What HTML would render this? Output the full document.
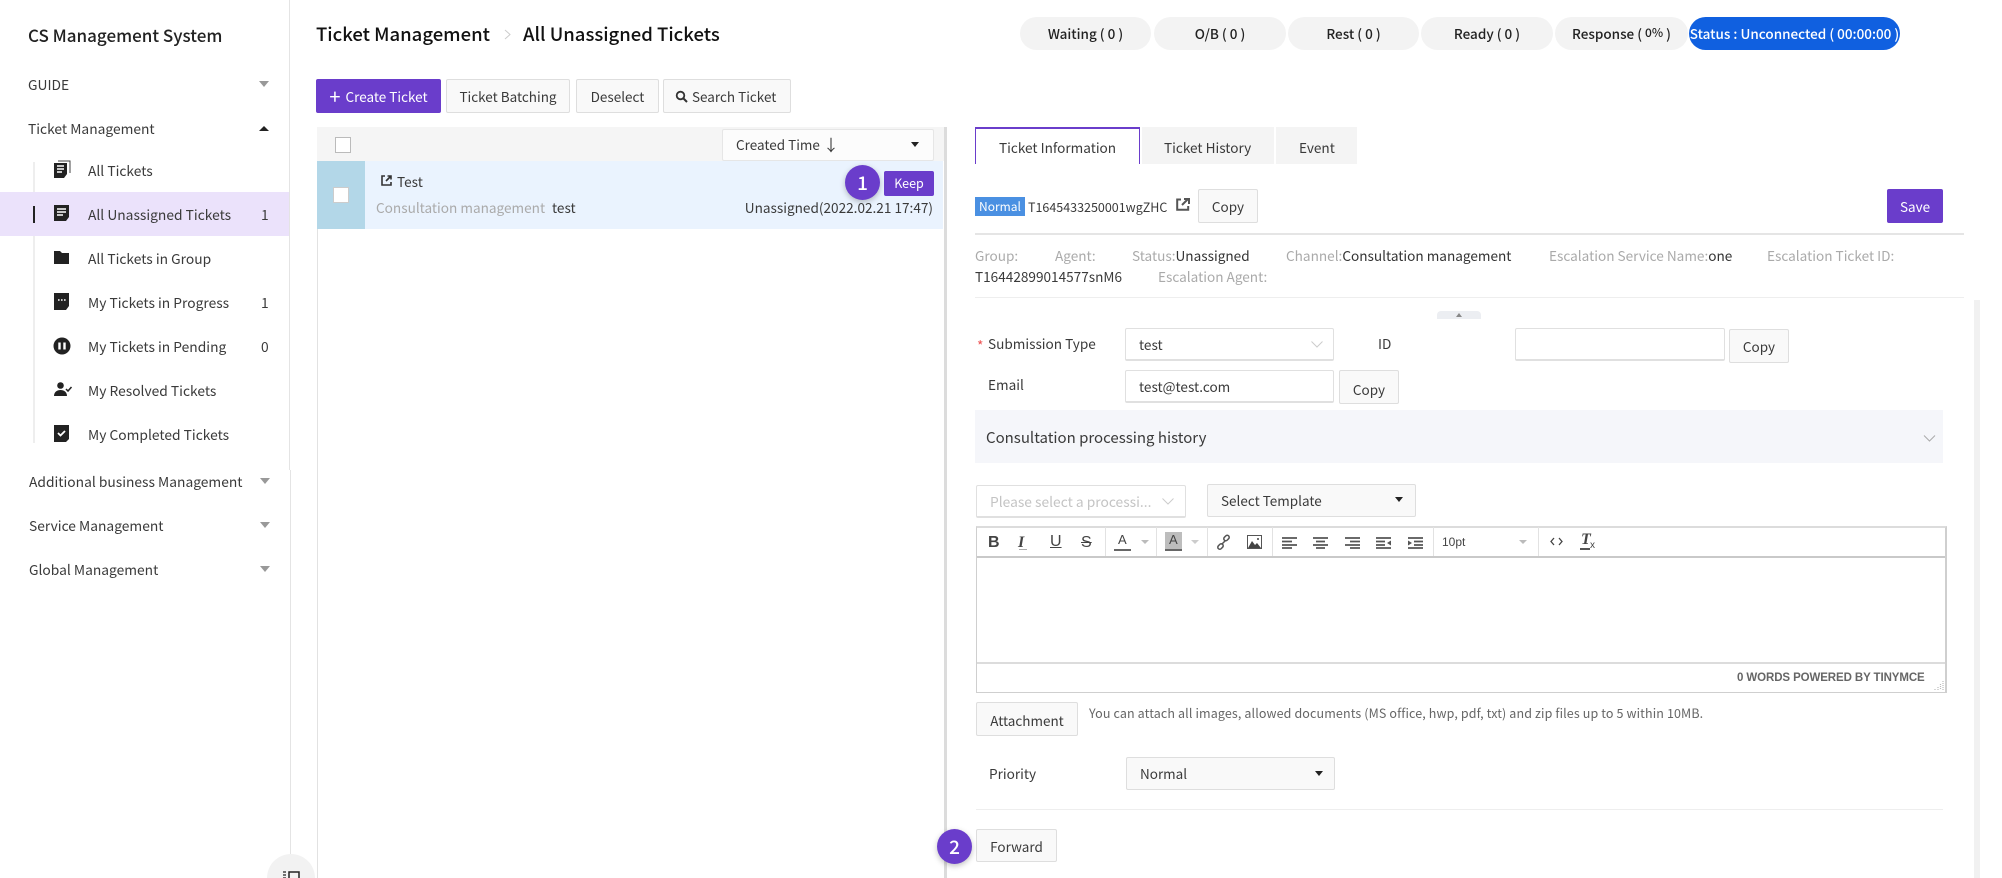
<!DOCTYPE html>
<html><head><meta charset="utf-8"><title>CS Management System</title>
<style>
html,body{margin:0;padding:0;background:#fff;width:2002px;height:878px;overflow:hidden}
#w{position:absolute;left:0;top:0;width:2002px;height:878px;overflow:hidden;font-family:"Noto Sans CJK KR","Liberation Sans",sans-serif;color:#333}
.t{position:absolute;white-space:nowrap;line-height:20px;font-size:13.8px;color:#3a3a3a}
.r{font-size:13.6px}
.s{position:absolute;box-sizing:border-box}
.b{position:absolute;box-sizing:border-box;border:1px solid #dedede;border-radius:2px;background:#f9f9f9;display:flex;align-items:center;justify-content:center;font-size:13.5px;color:#3a3a3a;white-space:nowrap}
.p{background:#6a3dcb;border-color:#6a3dcb;color:#fff}
.pill{position:absolute;top:17px;height:33px;padding-bottom:2px;box-sizing:border-box;border-radius:17px;background:#f3f3f3;display:flex;align-items:center;justify-content:center;font-size:13.5px;font-weight:500;color:#222;white-space:nowrap}
.inp{position:absolute;box-sizing:border-box;border:1px solid #e0e0e0;border-bottom-width:2px;border-radius:2px;background:#fff}
.d{position:absolute;width:0;height:0;border-left:5px solid transparent;border-right:5px solid transparent;border-top:6px solid #999}
.u{position:absolute;width:0;height:0;border-left:5px solid transparent;border-right:5px solid transparent;border-bottom:5px solid #222}
.k{position:absolute;width:0;height:0;border-left:4px solid transparent;border-right:4px solid transparent;border-top:5px solid #222}
.c{position:absolute;border-radius:50%;width:35px;height:35px;background:#6a3dcb;color:#fff;display:flex;align-items:center;justify-content:center;font-size:19px;font-weight:500;box-shadow:0 2px 6px rgba(0,0,0,.25)}
.gr{color:#aaa}
svg{position:absolute;overflow:visible}
.e{position:absolute;font-family:"Liberation Sans",sans-serif;color:#444;line-height:20px;white-space:nowrap}
.sep{position:absolute;top:527px;height:29px;width:1px;background:#e2e2e2}
.m{position:absolute;height:2px;background:#555}
</style></head><body><div id="w">

<!-- sidebar -->
<div class="s" style="left:289px;top:0;width:1px;height:470px;background:#e4e4e4"></div>
<div class="s" style="left:290px;top:470px;width:1px;height:408px;background:#e4e4e4"></div>
<div class="t" style="left:28px;top:25px;font-size:17px;font-weight:500;color:#222">CS Management System</div>
<div class="t" style="left:28px;top:74px">GUIDE</div><div class="d" style="left:259px;top:81px"></div>
<div class="t" style="left:28px;top:118px">Ticket Management</div><div class="u" style="left:259px;top:126px"></div>
<div class="s" style="left:33px;top:162px;width:2px;height:281px;background:#eee"></div>
<div class="s" style="left:0;top:192px;width:289px;height:44px;background:#ebe2fb"></div>
<div class="s" style="left:33px;top:206px;width:2px;height:17px;background:#222"></div>

<svg style="left:54px;top:160px" width="17" height="18" viewBox="0 0 17 18"><path d="M0 3h13v11l-3 4H0z" fill="#222"/><path d="M4 1h12v12" fill="none" stroke="#444" stroke-width="1"/><path d="M3 6h7M3 9h7M3 12h5" stroke="#fff" stroke-width="1.4"/></svg>
<div class="t" style="left:88px;top:160px">All Tickets</div>

<svg style="left:54px;top:205px" width="16" height="16" viewBox="0 0 16 16"><path d="M0 0h15v12l-3 4H0z" fill="#222"/><path d="M3 4h9M3 7h9M3 10h6" stroke="#fff" stroke-width="1.4"/></svg>
<div class="t" style="left:88px;top:204px">All Unassigned Tickets</div><div class="t" style="left:261px;top:204px">1</div>

<svg style="left:54px;top:251px" width="15" height="13" viewBox="0 0 15 13"><path d="M0 0h6l2 2h7v11H0z" fill="#222"/></svg>
<div class="t" style="left:88px;top:248px">All Tickets in Group</div>

<svg style="left:54px;top:293px" width="15" height="17" viewBox="0 0 15 17"><path d="M0 0h15v13l-3 4H0z" fill="#222"/><path d="M4 7h1.600M7 7h1.600M10 7h1.600" stroke="#fff" stroke-width="1.6"/></svg>
<div class="t" style="left:88px;top:292px">My Tickets in Progress</div><div class="t" style="left:261px;top:292px">1</div>

<svg style="left:53px;top:337px" width="18" height="18" viewBox="0 0 18 18"><circle cx="9" cy="9" r="8.500" fill="#222"/><path d="M6.500 5.500v7M11.500 5.500v7" stroke="#fff" stroke-width="2.400"/></svg>
<div class="t" style="left:88px;top:336px">My Tickets in Pending</div><div class="t" style="left:261px;top:336px">0</div>

<svg style="left:54px;top:382px" width="18" height="15" viewBox="0 0 18 15"><circle cx="6.500" cy="3.500" r="3.300" fill="#222"/><path d="M0 14c0-4 3-6 6.500-6s6.500 2 6.500 6z" fill="#222"/><path d="M12 7l2 2 3.500-4" fill="none" stroke="#222" stroke-width="1.500"/></svg>
<div class="t" style="left:88px;top:380px">My Resolved Tickets</div>

<svg style="left:54px;top:425px" width="15" height="17" viewBox="0 0 15 17"><path d="M0 0h15v14l-3 3H0z" fill="#222"/><path d="M4 8l2.500 2.500L11 6" fill="none" stroke="#fff" stroke-width="1.800"/></svg>
<div class="t" style="left:88px;top:424px">My Completed Tickets</div>

<div class="t" style="left:29px;top:471px">Additional business Management</div><div class="d" style="left:260px;top:478px"></div>
<div class="t" style="left:29px;top:515px">Service Management</div><div class="d" style="left:260px;top:522px"></div>
<div class="t" style="left:29px;top:559px">Global Management</div><div class="d" style="left:260px;top:566px"></div>

<div class="s" style="left:267px;top:854px;width:48px;height:48px;border-radius:50%;background:#f2f2f2"></div>
<svg style="left:282px;top:871px" width="18" height="8" viewBox="0 0 18 8"><path d="M1 1h3M1 4h3M1 7h3" stroke="#222" stroke-width="1.300"/><path d="M7 8V1h10v7" fill="none" stroke="#222" stroke-width="1.500"/></svg>

<!-- header -->
<div class="t" style="left:316px;top:24px;font-size:18.500px;font-weight:500;color:#111">Ticket Management</div>
<svg style="left:504px;top:29px" width="7" height="11" viewBox="0 0 7 11"><path d="M1 1l5 4.500L1 10" fill="none" stroke="#ccc" stroke-width="1"/></svg>
<div class="t" style="left:523px;top:24px;font-size:18.500px;font-weight:500;color:#111">All Unassigned Tickets</div>

<div class="pill" style="left:1020px;width:131px">Waiting ( 0 )</div>
<div class="pill" style="left:1154px;width:132px">O/B ( 0 )</div>
<div class="pill" style="left:1288px;width:131px">Rest ( 0 )</div>
<div class="pill" style="left:1421px;width:132px">Ready ( 0 )</div>
<div class="pill" style="left:1555px;width:133px">Response ( <span style="font-size:12px;margin:0 3px">0%</span> )</div>
<div class="pill" style="left:1689px;width:211px;background:#1060e0;color:#fff">Status : Unconnected ( 00:00:00 )</div>

<!-- list -->
<div class="b p" style="left:316px;top:79px;width:125px;height:34px"><span style="font-size:20px;margin-right:5px;line-height:18px">+</span>Create Ticket</div>
<div class="b" style="left:446px;top:79px;width:124px;height:34px">Ticket Batching</div>
<div class="b" style="left:576px;top:79px;width:83px;height:34px">Deselect</div>
<div class="b" style="left:663px;top:79px;width:128px;height:34px;justify-content:flex-start;padding-left:28px"><svg style="left:11px;top:10px" width="13" height="13" viewBox="0 0 13 13"><circle cx="5.500" cy="5.500" r="3.800" fill="none" stroke="#333" stroke-width="1.800"/><path d="M8.500 8.500l3.500 3.500" stroke="#333" stroke-width="2"/></svg>Search Ticket</div>

<div class="s" style="left:317px;top:127px;width:1px;height:751px;background:#e2e2e2"></div>
<div class="s" style="left:944px;top:127px;width:3px;height:751px;background:#dcdcdc"></div>
<div class="s" style="left:317px;top:127px;width:627px;height:34px;background:#f5f5f5"></div>
<div class="s" style="left:335px;top:137px;width:16px;height:16px;background:#fff;border:1px solid #bbb"></div>
<div class="b" style="left:722px;top:129px;width:212px;height:32px;background:#fcfcfc;justify-content:flex-start;padding:0 0 2px 13px;border-color:#e6e6e6">Created Time&nbsp;<span style="font-size:16px;line-height:16px">↓</span></div>
<div class="k" style="left:911px;top:142px"></div>
<div class="s" style="left:317px;top:161px;width:626px;height:68px;background:#eaf3fe"></div>
<div class="s" style="left:317px;top:161px;width:48px;height:68px;background:#b3d7e8"></div>
<div class="s" style="left:333px;top:187px;width:16px;height:16px;background:#fff;border:1px solid #ccc"></div>
<svg style="left:381px;top:175px" width="11" height="11" viewBox="0 0 11 11"><path d="M4 1H1v9h9V7" fill="none" stroke="#333" stroke-width="1.600"/><path d="M5 6l5-5M6.500 1H10v3.500" fill="none" stroke="#333" stroke-width="1.600"/></svg>
<div class="t r" style="left:397px;top:171px">Test</div>
<div class="t gr r" style="left:376px;top:197px">Consultation management</div>
<div class="t r" style="left:552px;top:197px">test</div>
<div class="t r" style="right:1069px;top:197px">Unassigned(2022.02.21 17:47)</div>
<div class="b p" style="left:884px;top:171px;width:50px;height:25px;font-size:12.500px;padding-bottom:2px">Keep</div>
<div class="c" style="left:845px;top:165px">1</div>

<!-- detail -->
<div class="s" style="left:975px;top:127px;width:165px;height:37px;border:2px solid #6a3dcb;border-bottom:0;border-left-width:1.500px;border-right-width:1.500px"></div>
<div class="t r" style="left:999px;top:137px">Ticket Information</div>
<div class="s" style="left:1142px;top:127px;width:132px;height:37px;background:#f4f4f4"></div>
<div class="t r" style="left:1164px;top:137px">Ticket History</div>
<div class="s" style="left:1276px;top:127px;width:81px;height:37px;background:#f4f4f4"></div>
<div class="t r" style="left:1299px;top:137px">Event</div>

<div class="s" style="left:975px;top:197px;width:50px;height:19px;background:#4a90e2;color:#fff;font-size:12px;line-height:19px;text-align:center">Normal</div>
<div class="t" style="left:1028px;top:197px;font-size:12.500px">T1645433250001wgZHC</div>
<svg style="left:1176px;top:198px" width="14" height="13" viewBox="0 0 14 13"><path d="M5 1.500H1.200v10.300h11V8" fill="none" stroke="#555" stroke-width="2"/><path d="M6 7l6-6M8 1h5v5" fill="none" stroke="#555" stroke-width="2"/></svg>
<div class="b" style="left:1198px;top:189px;width:60px;height:34px">Copy</div>
<div class="b p" style="left:1887px;top:189px;width:56px;height:34px">Save</div>
<div class="s" style="left:975px;top:233px;width:989px;height:2px;background:#e5e5e5"></div>

<div class="t gr r" style="left:975px;top:245px">Group:</div>
<div class="t gr r" style="left:1055px;top:245px">Agent:</div>
<div class="t gr r" style="left:1132px;top:245px">Status:<span style="color:#333">Unassigned</span></div>
<div class="t gr r" style="left:1286px;top:245px">Channel:<span style="color:#333">Consultation management</span></div>
<div class="t gr r" style="left:1549px;top:245px">Escalation Service Name:<span style="color:#333">one</span></div>
<div class="t gr r" style="left:1767px;top:245px">Escalation Ticket ID:</div>
<div class="t r" style="left:975px;top:266px">T16442899014577snM6</div>
<div class="t gr r" style="left:1158px;top:266px">Escalation Agent:</div>
<div class="s" style="left:975px;top:297px;width:989px;height:1px;background:#eee"></div>
<div class="s" style="left:1974px;top:300px;width:6px;height:578px;background:#f1f1f1"></div>

<div class="s" style="left:1437px;top:311px;width:44px;height:8px;background:#eceef2;border-radius:4px 4px 0 0"></div>
<div class="s" style="left:1456px;top:313px;width:0;height:0;border-left:3px solid transparent;border-right:3px solid transparent;border-bottom:4px solid #888"></div>

<div class="t" style="left:977px;top:335px;color:#e55">*</div>
<div class="t r" style="left:988px;top:333px">Submission Type</div>
<div class="inp" style="left:1125px;top:328px;width:209px;height:33px"></div>
<div class="t r" style="left:1139px;top:334px">test</div>
<svg style="left:1311px;top:341px" width="12" height="7" viewBox="0 0 12 7"><path d="M.500 .500L6 6 11.500 .500" fill="none" stroke="#ccc" stroke-width="1"/></svg>
<div class="t r" style="left:1378px;top:333px">ID</div>
<div class="inp" style="left:1515px;top:328px;width:210px;height:33px"></div>
<div class="b" style="left:1729px;top:329px;width:60px;height:34px">Copy</div>

<div class="t r" style="left:988px;top:374px">Email</div>
<div class="inp" style="left:1125px;top:370px;width:209px;height:33px"></div>
<div class="t r" style="left:1139px;top:376px">test@test.com</div>
<div class="b" style="left:1339px;top:370px;width:60px;height:34px;padding-top:3px">Copy</div>

<div class="s" style="left:975px;top:410px;width:968px;height:53px;background:#f5f6fa"></div>
<div class="t" style="left:986px;top:428px;font-size:15px">Consultation processing history</div>
<svg style="left:1923px;top:435px" width="13" height="7" viewBox="0 0 12 7"><path d="M.500 .500L6 6 11.500 .500" fill="none" stroke="#aaa" stroke-width="1"/></svg>

<div class="inp" style="left:976px;top:485px;width:210px;height:33px"></div>
<div class="t" style="left:990px;top:491px;color:#c4c4c4">Please select a processi...</div>
<svg style="left:1162px;top:498px" width="12" height="7" viewBox="0 0 12 7"><path d="M.500 .500L6 6 11.500 .500" fill="none" stroke="#ccc" stroke-width="1"/></svg>
<div class="b" style="left:1207px;top:484px;width:209px;height:33px;justify-content:flex-start;padding:0 0 2px 13px">Select Template</div>
<div class="k" style="left:1395px;top:497px"></div>

<!-- editor -->
<div class="s" style="left:976px;top:526px;width:971px;height:167px;border:1.500px solid #cfcfcf;border-top:2px solid #dcdcdc;border-right-width:2px"></div>
<div class="s" style="left:977px;top:556px;width:968px;height:2px;background:#c9c9c9"></div>
<div class="s" style="left:977px;top:662px;width:968px;height:2px;background:#dcdcdc"></div>
<div class="sep" style="left:1105px"></div><div class="sep" style="left:1156px"></div><div class="sep" style="left:1207px"></div><div class="sep" style="left:1272px"></div><div class="sep" style="left:1433px"></div><div class="sep" style="left:1538px"></div>

<div class="e" style="left:988px;top:533px;font-size:16px;font-weight:bold">B</div>
<div class="e" style="left:1018px;top:533px;font-size:16px;font-style:italic;font-weight:bold;font-family:'Liberation Serif',serif">I</div>
<div class="s" style="left:1019px;top:549px;width:8px;height:1px;background:#aaa"></div>
<div class="e" style="left:1050px;top:532px;font-size:16px;text-decoration:underline">U</div>
<div class="e" style="left:1081px;top:533px;font-size:16px;text-decoration:line-through">S</div>
<div class="e" style="left:1118px;top:530px;font-size:13px">A</div>
<div class="m" style="left:1114px;top:549px;width:17px;background:#666"></div>
<div class="s" style="left:1141px;top:540px;width:0;height:0;border-left:4px solid transparent;border-right:4px solid transparent;border-top:4px solid #bbb"></div>
<div class="s" style="left:1165px;top:532px;width:17px;height:19px;background:#bdbdbd"></div>
<div class="e" style="left:1169px;top:530px;font-size:13px">A</div>
<div class="m" style="left:1165px;top:549px;width:17px;background:#666"></div>
<div class="s" style="left:1191px;top:540px;width:0;height:0;border-left:4px solid transparent;border-right:4px solid transparent;border-top:4px solid #ccc"></div>
<svg style="left:1216px;top:535px" width="15" height="15" viewBox="0 0 15 15"><g fill="none" stroke="#555" stroke-width="1.500"><rect x="7.500" y="1" width="6" height="4" rx="2" transform="rotate(-45 10.500 3)"/><rect x="1.500" y="9.500" width="6" height="4" rx="2" transform="rotate(-45 4.500 11.500)"/><path d="M5.500 9.500l4-4"/></g></svg>
<svg style="left:1247px;top:535px" width="15" height="14" viewBox="0 0 15 14"><rect width="15" height="14" fill="#555"/><rect x="1" y="1" width="13" height="12" fill="#fff"/><path d="M1 13l4-7 3 4 2-2 4 5z" fill="#444"/><circle cx="11" cy="4" r="1" fill="#444"/></svg>
<svg style="left:1282px;top:537px" width="15" height="12" viewBox="0 0 15 12"><path d="M0 1h15M0 4.500h10M0 8h15M0 11h10" stroke="#555" stroke-width="1.700"/></svg>
<svg style="left:1313px;top:537px" width="15" height="12" viewBox="0 0 15 12"><path d="M0 1h15M3 4.500h9M0 8h15M3 11h9" stroke="#555" stroke-width="1.700"/></svg>
<svg style="left:1345px;top:537px" width="15" height="12" viewBox="0 0 15 12"><path d="M0 1h15M5 4.500h10M0 8h15M5 11h10" stroke="#555" stroke-width="1.700"/></svg>
<svg style="left:1376px;top:537px" width="15" height="12" viewBox="0 0 15 12"><path d="M0 1h15M0 4.500h9M0 8h9M0 11h15" stroke="#555" stroke-width="1.700"/><path d="M15 3.500v5l-4-2.500z" fill="#555"/></svg>
<svg style="left:1408px;top:537px" width="15" height="12" viewBox="0 0 15 12"><path d="M0 1h15M6 4.500h9M6 8h9M0 11h15" stroke="#555" stroke-width="1.700"/><path d="M0 3.500v5l4-2.500z" fill="#555"/></svg>
<div class="e" style="left:1442px;top:532px;font-size:12px">10pt</div>
<div class="s" style="left:1519px;top:540px;width:0;height:0;border-left:4px solid transparent;border-right:4px solid transparent;border-top:4px solid #bbb"></div>
<svg style="left:1550px;top:537px" width="13" height="9" viewBox="0 0 13 9"><path d="M4 1L1 4.500 4 8M9 1l3 3.500L9 8" fill="none" stroke="#444" stroke-width="1.300"/></svg>
<div class="e" style="left:1581px;top:530px;font-size:16px;font-style:italic;font-weight:bold;font-family:'Liberation Serif',serif">T</div>
<div class="s" style="left:1580px;top:548px;width:10px;height:2px;background:#555"></div>
<div class="e" style="left:1590px;top:536px;font-size:10px">x</div>

<div class="e" style="left:1737px;top:668px;font-size:11.500px;font-weight:bold;color:#666;letter-spacing:-.1px">0 WORDS POWERED BY TINYMCE</div>
<svg style="left:1935px;top:680px" width="9" height="10" viewBox="0 0 9 10"><path d="M8 1v9M5.500 4v6M3 7v3M0 9v1" stroke="#bbb" stroke-width="1.200" stroke-dasharray="1 1"/></svg>

<div class="b" style="left:976px;top:702px;width:102px;height:34px;padding-top:1px">Attachment</div>
<div class="t" style="left:1089px;top:703px;font-size:12.500px;color:#666;letter-spacing:.12px">You can attach all images, allowed documents (MS office, hwp, pdf, txt) and zip files up to 5 within 10MB.</div>

<div class="t r" style="left:989px;top:763px">Priority</div>
<div class="b" style="left:1126px;top:757px;width:209px;height:33px;justify-content:flex-start;padding:0 0 2px 13px">Normal</div>
<div class="k" style="left:1315px;top:771px"></div>
<div class="s" style="left:976px;top:809px;width:967px;height:1px;background:#eee"></div>
<div class="b" style="left:976px;top:829px;width:81px;height:33px;">Forward</div>
<div class="c" style="left:937px;top:829px">2</div>

</div></body></html>
